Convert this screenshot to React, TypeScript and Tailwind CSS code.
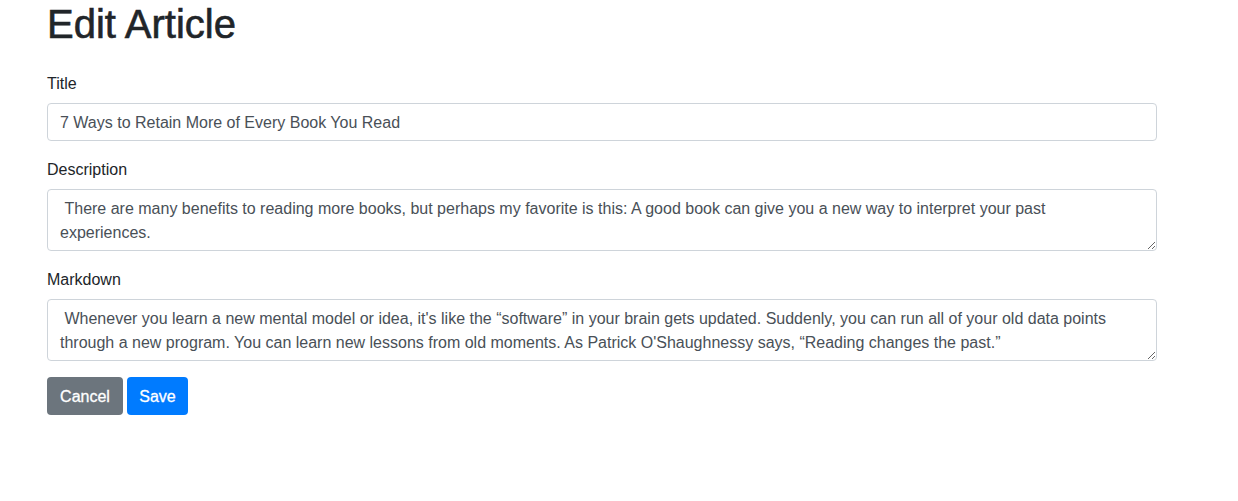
import React from "react";

const fieldCls =
  "block w-full rounded-[4px] border border-[#ced4da] bg-white px-3 pt-[7px] pb-[5px] text-base leading-6 text-[#495057] outline-none";

const labelCls = "mb-[7px] block pt-px text-base leading-6 text-[#212529]";

export default function App() {
  return (
    <div
      className="min-h-[501px] bg-white text-[#212529]"
      style={{ fontFamily: '"Liberation Sans", Arial, Helvetica, sans-serif' }}
    >
      <div className="ml-[47px] w-[1110px]">
        <h1 className="mb-[23px] text-[40px] font-medium leading-[48px] text-[#212529] [-webkit-text-stroke:0.6px_#212529]">
          Edit Article
        </h1>
        <form onSubmit={(e) => e.preventDefault()}>
          <div className="mb-4">
            <label className={labelCls}>Title</label>
            <input
              type="text"
              className={`${fieldCls} h-[38px]`}
              defaultValue="7 Ways to Retain More of Every Book You Read"
            />
          </div>
          <div className="mb-4">
            <label className={labelCls}>Description</label>
            <textarea
              rows={2}
              className={`${fieldCls} h-[62px]`}
              defaultValue={
                " There are many benefits to reading more books, but perhaps my favorite is this: A good book can give you a new way to interpret your past\nexperiences."
              }
            />
          </div>
          <div className="mb-4">
            <label className={labelCls}>Markdown</label>
            <textarea
              rows={2}
              className={`${fieldCls} h-[62px]`}
              defaultValue={
                " Whenever you learn a new mental model or idea, it's like the \u201csoftware\u201d in your brain gets updated. Suddenly, you can run all of your old data points through a new program. You can learn new lessons from old moments. As Patrick O'Shaughnessy says, \u201cReading changes the past.\u201d"
              }
            />
          </div>
          <div className="flex gap-1">
            <button
              type="button"
              className="h-[38px] w-[76px] rounded-[4px] bg-[#6c757d] pt-[2px] text-base leading-6 text-white [-webkit-text-stroke:0.3px_#ffffff]"
            >
              Cancel
            </button>
            <button
              type="submit"
              className="h-[38px] w-[61px] rounded-[4px] bg-[#007bff] pt-[2px] text-base leading-6 text-white [-webkit-text-stroke:0.3px_#ffffff]"
            >
              Save
            </button>
          </div>
        </form>
      </div>
    </div>
  );
}
